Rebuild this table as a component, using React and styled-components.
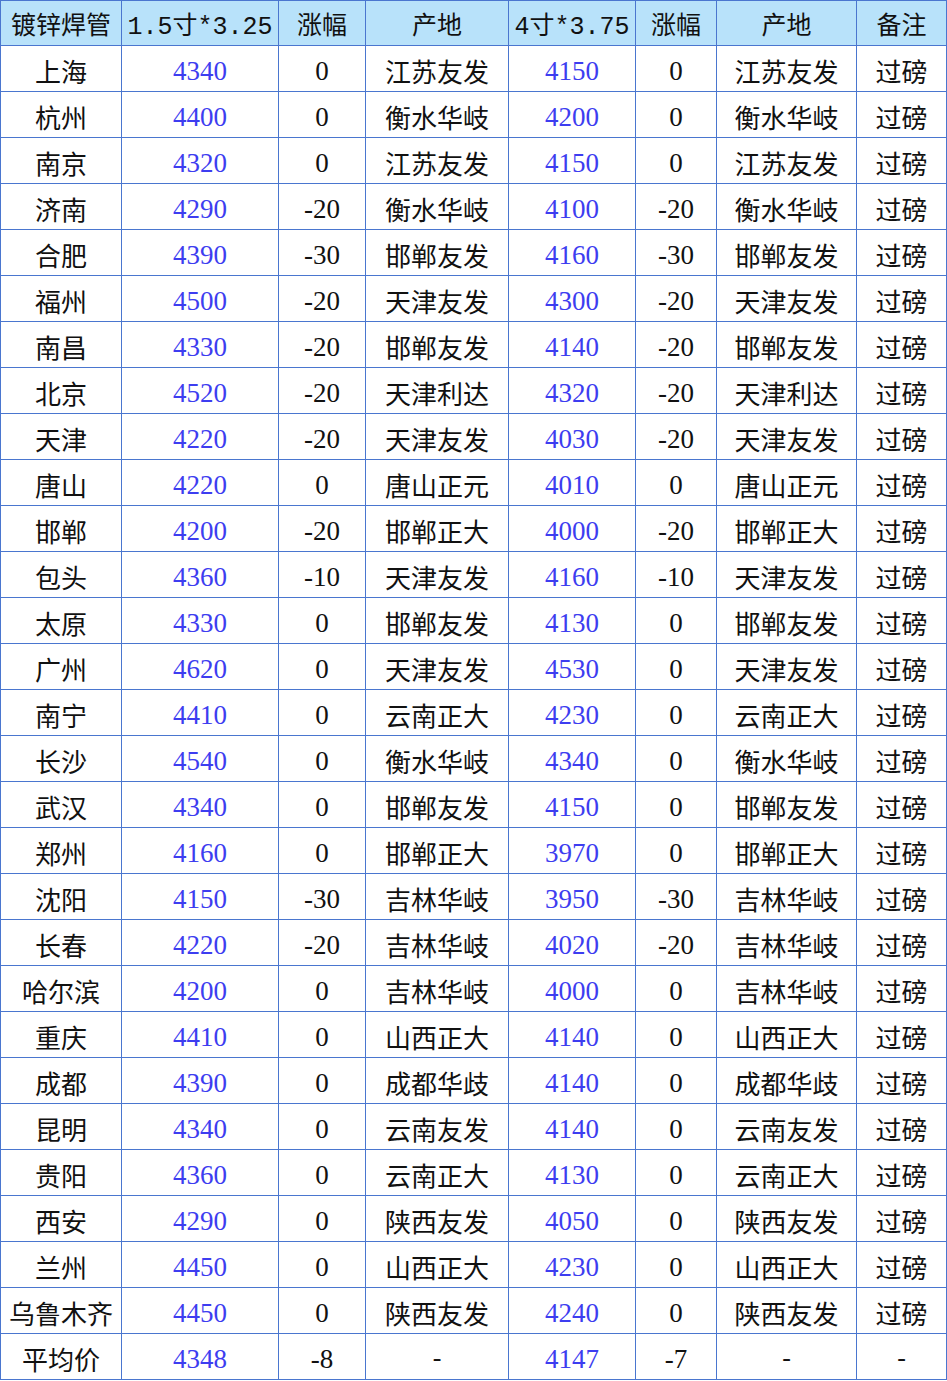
import styled, { createGlobalStyle } from "styled-components";

const GlobalStyle = createGlobalStyle`
  html, body {
    margin: 0;
    padding: 0;
    background: #ffffff;
  }
`;

const cols = [121, 157, 87, 143, 127, 81, 140, 90];
const heads = ["镀锌焊管", "1.5寸*3.25", "涨幅", "产地", "4寸*3.75", "涨幅", "产地", "备注"];

const rows = [
  ["上海", "4340", "0", "江苏友发", "4150", "0", "江苏友发"],
  ["杭州", "4400", "0", "衡水华岐", "4200", "0", "衡水华岐"],
  ["南京", "4320", "0", "江苏友发", "4150", "0", "江苏友发"],
  ["济南", "4290", "-20", "衡水华岐", "4100", "-20", "衡水华岐"],
  ["合肥", "4390", "-30", "邯郸友发", "4160", "-30", "邯郸友发"],
  ["福州", "4500", "-20", "天津友发", "4300", "-20", "天津友发"],
  ["南昌", "4330", "-20", "邯郸友发", "4140", "-20", "邯郸友发"],
  ["北京", "4520", "-20", "天津利达", "4320", "-20", "天津利达"],
  ["天津", "4220", "-20", "天津友发", "4030", "-20", "天津友发"],
  ["唐山", "4220", "0", "唐山正元", "4010", "0", "唐山正元"],
  ["邯郸", "4200", "-20", "邯郸正大", "4000", "-20", "邯郸正大"],
  ["包头", "4360", "-10", "天津友发", "4160", "-10", "天津友发"],
  ["太原", "4330", "0", "邯郸友发", "4130", "0", "邯郸友发"],
  ["广州", "4620", "0", "天津友发", "4530", "0", "天津友发"],
  ["南宁", "4410", "0", "云南正大", "4230", "0", "云南正大"],
  ["长沙", "4540", "0", "衡水华岐", "4340", "0", "衡水华岐"],
  ["武汉", "4340", "0", "邯郸友发", "4150", "0", "邯郸友发"],
  ["郑州", "4160", "0", "邯郸正大", "3970", "0", "邯郸正大"],
  ["沈阳", "4150", "-30", "吉林华岐", "3950", "-30", "吉林华岐"],
  ["长春", "4220", "-20", "吉林华岐", "4020", "-20", "吉林华岐"],
  ["哈尔滨", "4200", "0", "吉林华岐", "4000", "0", "吉林华岐"],
  ["重庆", "4410", "0", "山西正大", "4140", "0", "山西正大"],
  ["成都", "4390", "0", "成都华歧", "4140", "0", "成都华歧"],
  ["昆明", "4340", "0", "云南友发", "4140", "0", "云南友发"],
  ["贵阳", "4360", "0", "云南正大", "4130", "0", "云南正大"],
  ["西安", "4290", "0", "陕西友发", "4050", "0", "陕西友发"],
  ["兰州", "4450", "0", "山西正大", "4230", "0", "山西正大"],
  ["乌鲁木齐", "4450", "0", "陕西友发", "4240", "0", "陕西友发"],
];

const Table = styled.table`
  border-collapse: collapse;
  table-layout: fixed;
  width: 947px;
  font-family: "Liberation Serif", "Noto Sans CJK SC", serif;
  color: #111111;
`;

const HeadCell = styled.th`
  height: 44px;
  padding: 0;
  border: 1px solid #4a76cf;
  background: #b8e2fa;
  font-family: "Liberation Mono", "Noto Sans CJK SC", monospace;
  font-size: 25px;
  font-weight: normal;
  white-space: nowrap;
  overflow: hidden;
  text-align: center;
`;

const Cell = styled.td`
  height: 46px;
  padding: ${(p) => (p.$num ? "6px 0 0" : "3px 0 0")};
  border: 1px solid #4a76cf;
  font-size: ${(p) => (p.$num ? "27px" : "26px")};
  color: ${(p) => (p.$price ? "#3d3df0" : "#111111")};
  white-space: nowrap;
  overflow: hidden;
  text-align: center;
  box-sizing: border-box;
`;

const Row = ({ r }) => (
  <tr>
    <Cell>{r[0]}</Cell>
    <Cell $num $price>{r[1]}</Cell>
    <Cell $num>{r[2]}</Cell>
    <Cell>{r[3]}</Cell>
    <Cell $num $price>{r[4]}</Cell>
    <Cell $num>{r[5]}</Cell>
    <Cell>{r[6]}</Cell>
    <Cell>{r[7] ?? "过磅"}</Cell>
  </tr>
);

export default function App() {
  return (
    <>
      <GlobalStyle />
      <Table>
        <colgroup>
          {cols.map((w, i) => (
            <col key={i} style={{ width: w }} />
          ))}
        </colgroup>
        <thead>
          <tr>
            {heads.map((h, i) => (
              <HeadCell key={i}>{h}</HeadCell>
            ))}
          </tr>
        </thead>
        <tbody>
          {rows.map((r) => (
            <Row key={r[0]} r={r} />
          ))}
          <Row r={["平均价", "4348", "-8", "-", "4147", "-7", "-", "-"]} />
        </tbody>
      </Table>
    </>
  );
}
